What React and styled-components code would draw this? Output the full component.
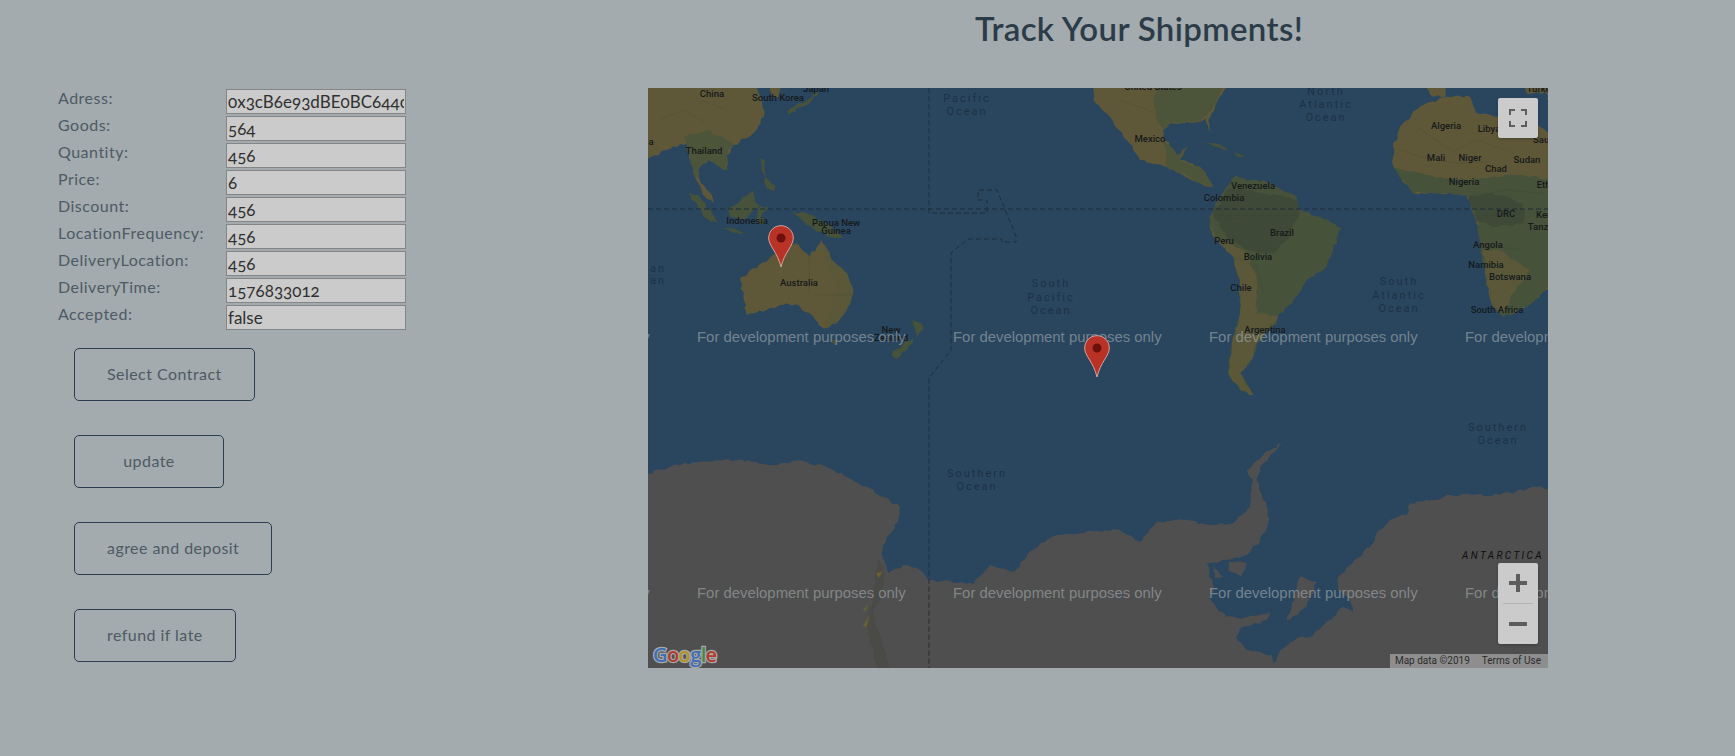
import React from 'react';
import styled, { createGlobalStyle } from 'styled-components';

const GlobalStyle = createGlobalStyle`
    html, body {
        margin: 0;
        height: 100%;
        background: #a3abae;
        overflow: hidden;
    }
`;

const UI_FONT = `Lato, "Open Sans", sans-serif`;

const Page = styled.div`
    height: 756px;
    font-family: ${UI_FONT};
    font-variant-numeric: oldstyle-nums;
    color: #4e5a64;
`;

const Title = styled.h1`
    margin: 0;
    height: 88px;
    padding: 8px 0 0 543px;
    box-sizing: border-box;
    text-align: center;
    font-size: 33px;
    line-height: 40px;
    font-weight: 600;
    letter-spacing: 0.35px;
    color: #2b3b48;
`;

const Content = styled.div`
    display: flex;
`;

const Side = styled.div`
    width: 648px;
    flex: none;
    padding: 1px 0 0 58px;
    box-sizing: border-box;
`;

const FieldRow = styled.div`
    display: grid;
    grid-template-columns: 168px 180px;
    height: 25px;
    margin-bottom: 2px;
`;

const FieldLabel = styled.label`
    font-size: 16px;
    line-height: 17px;
    letter-spacing: 0.5px;
`;

const FieldInput = styled.input`
    box-sizing: border-box;
    width: 180px;
    height: 25px;
    margin: 0;
    padding: 0 1px 1px;
    border: 1px solid #838586;
    background: #cbcbcb;
    color: #303030;
    font-family: ${UI_FONT};
    font-variant-numeric: oldstyle-nums;
    font-size: 17px;
    outline: none;
`;

const Actions = styled.div`
    display: flex;
    flex-direction: column;
    align-items: flex-start;
    gap: 34px;
    margin: 18px 0 0 16px;
`;

const ActionButton = styled.button`
    min-width: 150px;
    height: 53px;
    padding: 0 32px 2px;
    background: transparent;
    border: 1px solid #2c3e50;
    border-radius: 5px;
    color: #4e5a64;
    font-family: ${UI_FONT};
    font-size: 16px;
    letter-spacing: 0.45px;
`;

const MapBox = styled.div`
    position: relative;
    width: 900px;
    height: 580px;
    overflow: hidden;
    background: #2a465f;
`;

const MapCanvas = styled.svg`
    display: block;
`;

const ControlBox = styled.div`
    position: absolute;
    right: 10px;
    width: 40px;
    background: #cbcbcb;
    border-radius: 2px;
    box-shadow: 0 1px 3px rgba(0, 0, 0, 0.25);
`;

const FullscreenBox = styled(ControlBox)`
    top: 10px;
    height: 40px;
`;

const ZoomBox = styled(ControlBox)`
    bottom: 24px;
    height: 81px;
`;

const ControlGlyph = styled.svg`
    display: block;
    width: 40px;
    height: 40px;
`;

const ZoomDivider = styled.div`
    height: 1px;
    margin: 0 5px;
    background: #b4b4b4;
`;

const Attribution = styled.div`
    position: absolute;
    right: 0;
    bottom: 0;
    display: flex;
    gap: 12px;
    height: 14px;
    padding: 0 7px 0 5px;
    background: #8e8e8e;
    font-family: Roboto, sans-serif;
    font-variant-numeric: lining-nums;
    font-size: 10px;
    line-height: 14px;
    color: #2b2b2b;
    white-space: nowrap;
`;

const fields = [
    ['Adress:', '0x3cB6e93dBE0BC644c1F8'],
    ['Goods:', '564'],
    ['Quantity:', '456'],
    ['Price:', '6'],
    ['Discount:', '456'],
    ['LocationFrequency:', '456'],
    ['DeliveryLocation:', '456'],
    ['DeliveryTime:', '1576833012'],
    ['Accepted:', 'false'],
];

const buttons = ['Select Contract', 'update', 'agree and deposit', 'refund if late'];

const BROWN = '#5f5838';
const OLIVE = '#5a5839';
const SOFT_GREEN = '#4c5439';
const GREEN = '#465239';
const DARK = '#3f4937';
const ICE = '#4f4f4f';

// breaks the straight edges of a traced shape up so the coast looks like a coast
const rough = (points) =>
{
    const pts = points.split(' ').map(p => p.split(',').map(Number));
    let seed = pts.length * 131 + 7;
    const noise = () =>
    {
        seed = (seed * 16807) % 2147483647;
        return seed / 2147483647 - 0.5;
    };
    const out = [];
    pts.forEach((p, i) =>
    {
        const q = pts[(i + 1) % pts.length];
        const steps = Math.max(1, Math.round(Math.hypot(q[0] - p[0], q[1] - p[1]) / 12));
        for (let s = 0; s < steps; s++)
        {
            const t = s / steps;
            const jx = s ? noise() * 9 : 0;
            const jy = s ? noise() * 9 : 0;
            out.push(`${p[0] + (q[0] - p[0]) * t + jx},${p[1] + (q[1] - p[1]) * t + jy}`);
        }
    });
    return out.join(' ');
};

// land shapes, traced from the crops: the numbers are crop coordinates
const westLand = [
    [BROWN, '0,0 340,0 365,60 372,110 350,150 320,175 280,195 262,225 262,270 240,262 205,240 180,260 175,290 215,345 220,370 190,345 165,290 150,240 140,190 120,192 80,210 0,250'],
    [SOFT_GREEN, '130,170 200,150 280,190 262,225 262,270 240,262 205,240 180,260 175,290 165,290 150,240 140,190'],
    [BROWN, '385,0 420,0 415,50 398,55'],
    [GREEN, '445,105 450,85 500,62 530,30 535,45 505,72 470,85'],
    [GREEN, '145,340 175,345 215,400 235,430 215,425 175,385'],
    [GREEN, '265,385 300,365 340,332 345,365 370,380 340,390 320,415 270,410'],
    [GREEN, '235,440 270,445 310,460 280,458'],
    [GREEN, '355,385 385,380 365,400 375,430 352,430'],
    [GREEN, '355,230 375,240 375,290 405,315 400,333 380,325 370,280'],
    [GREEN, '455,392 510,405 560,430 610,470 570,470 530,455 500,435 480,415'],
    [BROWN, '300,600 330,570 380,545 410,520 470,490 510,530 545,480 575,540 610,570 640,630 620,690 590,730 550,745 510,700 480,680 440,670 380,690 320,705 310,650'],
    [OLIVE, '545,480 575,540 610,570 640,630 620,690 590,730 550,745 575,680 590,620 560,560'],
    [GREEN, '575,780 590,780 585,795'],
    [GREEN, '815,710 850,740 830,770 825,745'],
    [GREEN, '755,825 790,790 820,775 805,805 770,838'],
];

const eastLand = [
    [BROWN, '-20,0 395,0 345,80 325,120 335,160 315,115 300,125 210,130 190,150 190,170 230,225 265,200 240,240 300,260 340,320 300,310 200,260 120,240 80,180 30,110 -20,60'],
    [SOFT_GREEN, '180,0 380,0 335,90 300,125 210,130 190,150 170,120 160,60'],
    [SOFT_GREEN, '190,170 230,225 265,200 240,240 300,260 340,320 300,310 200,260'],
    [GREEN, '305,185 345,190 385,210 345,200'],
    [GREEN, '400,215 440,228 410,228'],
    [GREEN, '330,425 335,400 345,370 380,320 410,285 440,300 500,305 590,350 600,390 660,410 725,445 700,510 680,560 620,600 590,650 540,700 530,730 470,790 460,830 420,880 460,945 420,930 385,880 395,800 420,700 420,600 400,530 340,470'],
    [DARK, '340,400 380,330 450,330 590,360 600,400 570,470 520,520 440,510 380,470'],
    [OLIVE, '330,425 345,470 400,495 440,520 470,600 470,700 535,710 470,790 460,830 420,880 460,945 420,930 385,880 395,800 420,700 420,600 400,530 340,470'],
    [BROWN, '950,0 1040,0 1035,50 1000,50'],
    [BROWN, '880,200 900,140 960,80 1040,50 1110,50 1130,100 1230,120 1320,140 1370,180 1370,600 1280,680 1210,710 1180,680 1160,600 1140,480 1130,420 1100,345 1000,340 940,340 880,260'],
    [GREEN, '880,262 1000,290 1100,300 1250,285 1370,300 1370,600 1280,680 1210,710 1180,680 1160,600 1140,480 1130,420 1100,345 1000,340 940,340'],
    [DARK, '1105,350 1180,340 1270,370 1270,430 1180,440 1130,420'],
    [OLIVE, '1150,510 1200,510 1290,570 1240,640 1210,700 1180,680 1160,600'],
    [BROWN, '1270,0 1370,0 1370,38 1280,40'],
    [BROWN, '1320,0 1370,0 1370,110'],
];

const antarcticWest = '0,290 90,260 180,245 290,240 400,255 480,240 570,265 680,320 780,380 775,425 740,470 725,520 745,580 790,555 840,570 865,600 1000,612 1050,555 1120,575 1200,490 1250,465 1440,450 1440,890 0,890';

const antarcticEast = '60,390 120,425 165,370 250,360 330,375 400,370 450,320 460,240 440,210 490,165 545,128 490,190 470,240 500,320 505,370 480,425 440,465 375,480 320,492 340,560 330,600 380,650 430,655 510,635 500,660 420,685 408,710 440,750 515,765 520,790 550,745 590,715 640,705 700,650 730,620 760,635 750,600 715,570 715,530 790,455 825,420 830,400 870,360 920,345 930,310 1000,300 1050,285 1120,285 1200,285 1310,260 1370,270 1370,830 -20,830 -20,395';

const shelves = ['385,482 440,490 425,530 385,512', '340,495 370,530 345,535', '600,530 650,545 620,620 560,660 575,620'];

const westBorders = ['508,530 508,640', '532,645 640,645', '60,120 130,90 200,130', '180,60 260,90'];
const eastBorders = ['950,140 1060,215 1130,180 1230,215', '885,205 960,230 1070,250 1160,245', '345,400 420,420 480,480', '400,530 470,560 490,640', '1110,350 1220,330 1330,340', '1130,490 1260,510', '60,60 170,100'];

const waterLabels = [
    [319, 14, 'Pacific'], [319, 27, 'Ocean'],
    [403, 199, 'South'], [403, 213, 'Pacific'], [403, 226, 'Ocean'],
    [10, 184, 'an'], [10, 196, 'an'],
    [678, 7, 'North'], [678, 20, 'Atlantic'], [678, 33, 'Ocean'],
    [751, 197, 'South'], [751, 211, 'Atlantic'], [751, 224, 'Ocean'],
    [329, 389, 'Southern'], [329, 402, 'Ocean'],
    [850, 343, 'Southern'], [850, 356, 'Ocean'],
];

const landLabels = [
    [64, 9, 'China'], [130, 13, 'South Korea'], [168, 4, 'Japan'], [56, 66, 'Thailand'],
    [99, 136, 'Indonesia'], [188, 138, 'Papua New'], [188, 146, 'Guinea'], [151, 198, 'Australia'],
    [243, 245, 'New'], [243, 253, 'Zealand'], [3, 57, 'a'], [505, 2, 'United States'],
    [502, 54, 'Mexico'], [605, 101, 'Venezuela'], [576, 113, 'Colombia'], [634, 148, 'Brazil'],
    [576, 156, 'Peru'], [610, 172, 'Bolivia'], [593, 203, 'Chile'], [617, 245, 'Argentina'],
    [798, 41, 'Algeria'], [841, 44, 'Libya'], [788, 73, 'Mali'], [822, 73, 'Niger'],
    [848, 84, 'Chad'], [879, 75, 'Sudan'], [816, 97, 'Nigeria'], [858, 129, 'DRC'],
    [840, 160, 'Angola'], [838, 180, 'Namibia'], [862, 192, 'Botswana'], [849, 225, 'South Africa'],
    [893, 4, 'Turkey'], [906, 100, 'Ethiopia'], [901, 130, 'Kenya'], [899, 142, 'Tanzania'], [912, 55, 'Saudi Arabia'],
];

const watermarks = [];
[254, 510].forEach(y =>
{
    [-207, 49, 305, 561, 817].forEach(x => watermarks.push([x, y]));
});

const Pin = ({ x, y }) => (
    <g transform={`translate(${x} ${y})`}>
        <path d="M13 .7C6 .7.7 6.2.7 13c0 8 8.8 14 12.300 29 3.500-15 12.300-21 12.300-29C25.300 6.200 20 .7 13 .7Z" fill="#b83226" stroke="#d8a39c" strokeWidth="1" />
        <circle cx="13" cy="13" r="4.500" fill="#6c100c" />
    </g>
);

const GoogleMark = () => (
    <text x="5" y="574" fontFamily='"Open Sans", sans-serif' fontSize="20" fontWeight="600" letterSpacing="-0.6" stroke="#a8a8a8" strokeWidth="2.500" paintOrder="stroke">
        <tspan fill="#3f6fb8">G</tspan>
        <tspan fill="#b23a2e">o</tspan>
        <tspan fill="#b09325">o</tspan>
        <tspan fill="#3f6fb8">g</tspan>
        <tspan fill="#3f8a48">l</tspan>
        <tspan fill="#b23a2e">e</tspan>
    </text>
);

const Shapes = ({ items }) => items.map(([fill, points]) => <polygon key={points} fill={fill} points={rough(points)} />);

const Borders = ({ items }) => (
    <g fill="none" stroke="#35382c" strokeWidth="1.500" strokeOpacity=".35">
        {items.map(points => <polyline key={points} points={points} />)}
    </g>
);

const WorldMap = () => (
    <MapCanvas width="900" height="580" viewBox="0 0 900 580">
        <g transform="translate(-8 -8) scale(.3333)">
            <Shapes items={westLand} />
            <Borders items={westBorders} />
        </g>
        <g transform="translate(452 -8) scale(.3333)">
            <Shapes items={eastLand} />
            <Borders items={eastBorders} />
        </g>
        <g transform="translate(-8 292) scale(.3333)">
            <polygon fill={ICE} points={rough(antarcticWest)} />
            <polygon fill="#4a4a47" points={rough('715,540 735,560 725,640 700,700 730,800 750,864 715,864 680,740 700,640')} />
            <polygon fill="#67602f" points="708,580 728,574 716,594" />
            <polygon fill="#67602f" points="668,690 686,672 676,694" />
            <polygon fill="#67602f" points="668,740 690,702 680,740" />
        </g>
        <g transform="translate(452 312) scale(.3333)">
            <polygon fill={ICE} points={rough(antarcticEast)} />
            <Shapes items={shelves.map(points => [ICE, points])} />
        </g>
        <g fill="none" stroke="#1f2c39" strokeWidth="1" strokeDasharray="5 3">
            <path d="M0 121H900" />
            <path d="M281 0V125H339V112H330V102H349L368 148V154H354V151H320L303 165V262L281 290V580" />
        </g>
        {waterLabels.map(([x, y, label]) => (
            <text key={`${x}${y}`} x={x} y={y} textAnchor="middle" fontFamily="Roboto, sans-serif" fontSize="11" letterSpacing="2" fill="#1d3144">{label}</text>
        ))}
        {landLabels.map(([x, y, label]) => (
            <text key={label} x={x} y={y} textAnchor="middle" fontFamily="Roboto, sans-serif" fontSize="9.500" fontWeight="500" fill="#15191c">{label}</text>
        ))}
        <text x="814" y="471" fontFamily="Roboto, sans-serif" fontSize="10" fontStyle="italic" letterSpacing="2.400" fill="#0e0e0e">ANTARCTICA</text>
        {watermarks.map(([x, y]) => (
            <text key={`${x}-${y}`} x={x} y={y} fontFamily='"Liberation Sans", sans-serif' fontSize="14.900" fill="#a4abae" fillOpacity=".62">For development purposes only</text>
        ))}
        <Pin x={120} y={137} />
        <Pin x={436} y={247} />
        <GoogleMark />
    </MapCanvas>
);

const App = () => (
    <Page>
        <GlobalStyle />
        <Title>Track Your Shipments!</Title>
        <Content>
            <Side>
                {fields.map(([label, value]) => (
                    <FieldRow key={label}>
                        <FieldLabel>{label}</FieldLabel>
                        <FieldInput readOnly value={value} />
                    </FieldRow>
                ))}
                <Actions>
                    {buttons.map(text => <ActionButton key={text}>{text}</ActionButton>)}
                </Actions>
            </Side>
            <MapBox>
                <WorldMap />
                <FullscreenBox>
                    <ControlGlyph viewBox="0 0 40 40">
                        <path d="M12 17v-5h5M23 12h5v5M28 23v5h-5M17 28h-5v-5" fill="none" stroke="#5d5d5d" strokeWidth="2" />
                    </ControlGlyph>
                </FullscreenBox>
                <ZoomBox>
                    <ControlGlyph viewBox="0 0 40 40">
                        <path d="M11 20h18M20 11v18" stroke="#5d5d5d" strokeWidth="4" />
                    </ControlGlyph>
                    <ZoomDivider />
                    <ControlGlyph viewBox="0 0 40 40">
                        <path d="M11 20h18" stroke="#5d5d5d" strokeWidth="4" />
                    </ControlGlyph>
                </ZoomBox>
                <Attribution>
                    <span>Map data ©2019</span>
                    <span>Terms of Use</span>
                </Attribution>
            </MapBox>
        </Content>
    </Page>
);

export default App;
